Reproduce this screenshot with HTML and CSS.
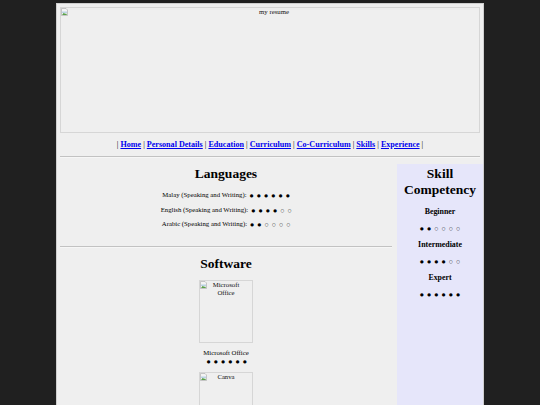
FILE: index.html
```html
<!DOCTYPE html>
<html>
<head>
<meta charset="utf-8">
<title>my resume</title>
<link rel="stylesheet" href="styles.css">
</head>
<body>
<div class="page">
  <div class="banner">
    <svg class="broken" viewBox="0 0 7 8" width="7" height="8"><path d="M0.5 0.5H5L6.5 2V7.5H0.5Z" fill="#f4f4f4" stroke="#a8a8a8" stroke-width="0.6"/><path d="M1 3.5H6V5H1Z" fill="#bcd3e6"/><path d="M1 7L2.8 4.8L4.2 6L5 5.2L6 7Z" fill="#5aa04a"/></svg>
    <span class="alt-wide">my resume</span>
  </div>
  <p class="nav">| <a href="#home">Home</a> | <a href="#personal">Personal Details</a> | <a href="#education">Education</a> | <a href="#curriculum">Curriculum</a> | <a href="#cocurriculum">Co-Curriculum</a> | <a href="#skills">Skills</a> | <a href="#experience">Experience</a> |</p>
  <hr class="rule">
  <div class="main">
    <div class="content">
      <section class="block langs">
        <h1 class="title">Languages</h1>
        <p class="row">Malay (Speaking and Writing): <span class="dots">●●●●●●</span></p>
        <p class="row">English (Speaking and Writing): <span class="dots">●●●●○○</span></p>
        <p class="row">Arabic (Speaking and Writing): <span class="dots">●●○○○○</span></p>
      </section>
      <hr class="rule">
      <section class="block soft">
        <h1 class="title">Software</h1>
        <div class="thumb">
          <svg class="broken" viewBox="0 0 7 8" width="7" height="8"><path d="M0.5 0.5H5L6.5 2V7.5H0.5Z" fill="#f4f4f4" stroke="#a8a8a8" stroke-width="0.6"/><path d="M1 3.5H6V5H1Z" fill="#bcd3e6"/><path d="M1 7L2.8 4.8L4.2 6L5 5.2L6 7Z" fill="#5aa04a"/></svg>
          <span class="alt">Microsoft Office</span>
        </div>
        <p class="cap">Microsoft Office<br><span class="dots">●●●●●●</span></p>
        <div class="thumb">
          <svg class="broken" viewBox="0 0 7 8" width="7" height="8"><path d="M0.5 0.5H5L6.5 2V7.5H0.5Z" fill="#f4f4f4" stroke="#a8a8a8" stroke-width="0.6"/><path d="M1 3.5H6V5H1Z" fill="#bcd3e6"/><path d="M1 7L2.8 4.8L4.2 6L5 5.2L6 7Z" fill="#5aa04a"/></svg>
          <span class="alt">Canva</span>
        </div>
      </section>
    </div>
    <aside class="side">
      <h1 class="side-title">Skill Competency</h1>
      <h3 class="level">Beginner</h3>
      <p class="side-dots"><span class="dots">●●○○○○</span></p>
      <h3 class="level">Intermediate</h3>
      <p class="side-dots"><span class="dots">●●●●○○</span></p>
      <h3 class="level">Expert</h3>
      <p class="side-dots"><span class="dots">●●●●●●</span></p>
    </aside>
  </div>
</div>
</body>
</html>
```
FILE: styles.css
```css
html, body {
  margin: 0;
  padding: 0;
}
body {
  background: #202020;
  font-family: "Liberation Serif", "Times New Roman", serif;
  color: #000;
  padding-top: 3px;
  height: 405px;
  box-sizing: border-box;
  overflow: hidden;
}
.page {
  width: 420px;
  margin: 0 auto;
  padding: 3px 3px 0;
  border: 1px solid #cfcfcf;
  border-bottom: 0;
  background: #efefef;
  height: 398px;
  overflow: hidden;
}
.banner {
  position: relative;
  height: 124px;
  border: 1px solid #d6d6d6;
  text-align: center;
  font-size: 6.75px;
  line-height: 8px;
}
.broken {
  position: absolute;
  left: 0;
  top: 0;
  display: block;
}
.alt-wide {
  display: block;
  padding-left: 8px;
  color: #111;
}
.nav {
  margin: 7px 0 0;
  text-align: center;
  font-size: 8.1px;
  line-height: 9px;
}
.nav a {
  color: #0000ee;
  font-weight: bold;
  text-decoration: underline;
}
.rule {
  margin: 7px 0 0;
  border: 0;
  border-top: 1px solid #c2c2c2;
  border-bottom: 1px solid #f6f6f6;
  height: 0;
}
.main {
  display: flex;
  gap: 5px;
  margin-top: 6px;
  margin-right: -3px;
  align-items: flex-start;
}
.content {
  width: 332px;
  flex: none;
}
.block {
  text-align: center;
}
.title {
  margin: 2px 0 9px;
  font-size: 13.5px;
  line-height: 16px;
  font-weight: bold;
}
.row {
  margin: 0 0 6.5px;
  font-size: 6.75px;
  line-height: 8px;
}
.dots {
  font-family: "DejaVu Sans", sans-serif;
  font-size: 4.2px;
  line-height: 0;
  letter-spacing: 3.6px;
  margin-right: -3.6px;
  margin-left: 1.5px;
}
.langs {
  padding-bottom: 4px;
}
.content .rule {
  margin-top: 7px;
}
.soft {
  padding-top: 6px;
}
.soft .title {
  margin-bottom: 8.6px;
}
.thumb {
  position: relative;
  width: 52px;
  height: 61px;
  margin: 0 auto;
  border: 1px solid #d6d6d6;
  font-size: 6.75px;
  line-height: 8px;
  text-align: center;
}
.alt {
  display: block;
  padding: 0 8px;
  color: #111;
}
.cap {
  margin: 6.4px 0 6.6px;
  font-size: 6.75px;
  line-height: 8px;
}
.side {
  width: 86px;
  flex: none;
  min-height: 260px;
  background: #e6e6fa;
  text-align: center;
}
.side-title {
  margin: 2px 0 8.8px;
  font-size: 13.5px;
  line-height: 16px;
  font-weight: bold;
}
.level {
  margin: 0 0 8px;
  font-size: 7.9px;
  line-height: 9px;
  font-weight: bold;
}
.side-dots {
  margin: 0 0 8px;
  font-size: 6.75px;
  line-height: 8px;
}
.side-dots .dots {
  margin-left: 0;
}
```
